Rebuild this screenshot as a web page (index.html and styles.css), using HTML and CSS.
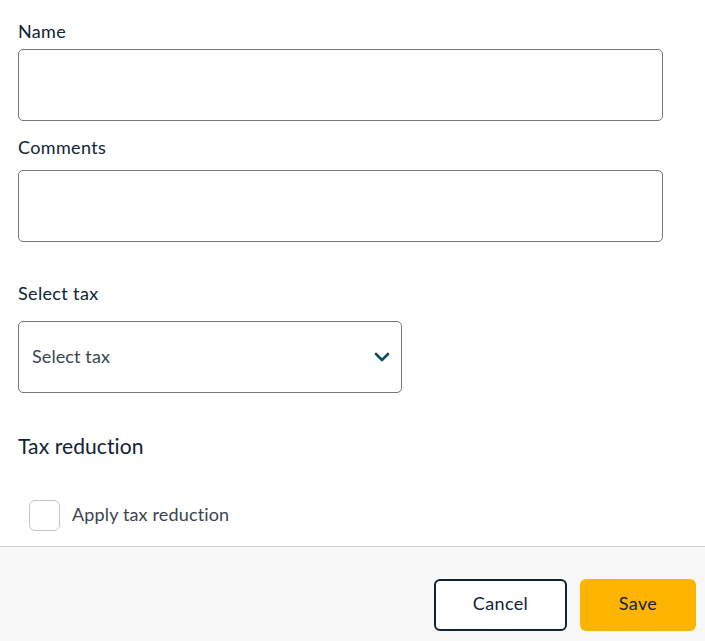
FILE: index.html
```html
<!DOCTYPE html>
<html>
<head>
<meta charset="utf-8">
<link rel="stylesheet" href="styles.css">
</head>
<body>
<div class="page">
  <div class="form">
    <label class="label label-name">Name</label>
    <div class="input"></div>
    <label class="label label-comments">Comments</label>
    <div class="input"></div>
    <label class="label label-select">Select tax</label>
    <div class="select">
      <span class="select-text">Select tax</span>
      <svg class="chevron" width="16" height="12" viewBox="0 0 16 12"><path d="M2 3 L8 9 L14 3" fill="none" stroke="#0e4d5f" stroke-width="2.6" stroke-linecap="round" stroke-linejoin="round"/></svg>
    </div>
    <h2 class="section-title">Tax reduction</h2>
    <div class="checkbox-row">
      <span class="checkbox"></span>
      <span class="checkbox-label">Apply tax reduction</span>
    </div>
  </div>
  <div class="footer">
    <button class="btn btn-cancel">Cancel</button>
    <button class="btn btn-save">Save</button>
  </div>
</div>
</body>
</html>
```
FILE: styles.css
```css
html, body { margin: 0; padding: 0; background: #ffffff; }
body { font-family: Lato, "Open Sans", sans-serif; color: #0f2236; }
.page { width: 705px; height: 641px; display: flex; flex-direction: column; }
.form { padding: 19px 42px 0 18px; display: flex; flex-direction: column; align-items: flex-start; height: 546px; flex-shrink: 0; box-sizing: border-box; }
.form > * { flex-shrink: 0; }
.label { display: block; font-size: 18px; font-weight: 400; line-height: 24px; color: #0f2236; letter-spacing: 0.35px; }
.label-name { margin-bottom: 6px; }
.label-comments { margin-top: 14px; margin-bottom: 11px; }
.label-select { margin-top: 39px; margin-bottom: 16px; }
.input { width: 645px; height: 72px; box-sizing: border-box; border: 1px solid #767676; border-radius: 5px; }
.select { width: 384px; height: 72px; box-sizing: border-box; border: 1px solid #767676; border-radius: 5px; display: flex; align-items: center; justify-content: space-between; padding: 0 11px 2px 13px; }
.select-text { font-size: 18px; color: #3a4450; letter-spacing: 0.1px; }
.chevron { display: block; margin-top: 2px; }
.section-title { font-size: 21px; font-weight: 400; line-height: 28px; margin: 39px 0 0 0; color: #0f2236; letter-spacing: 0.1px; }
.checkbox-row { display: flex; align-items: center; margin-top: 40px; padding-left: 11px; }
.checkbox { width: 31px; height: 31px; box-sizing: border-box; border: 1px solid #c4c4c4; border-radius: 6px; background: #fff; }
.checkbox-label { font-size: 18px; margin-left: 12px; color: #3a4450; letter-spacing: 0.15px; padding-bottom: 3px; }
.footer { flex: 1; background: #f8f8f8; border-top: 1px solid #cfcfcf; display: flex; justify-content: flex-end; align-items: flex-start; padding: 32px 9px 0 0; gap: 13px; }
.btn { font-family: Lato, "Open Sans", sans-serif; font-size: 18px; font-weight: 400; height: 52px; border-radius: 6px; color: #0f2236; cursor: pointer; letter-spacing: 0.35px; padding: 0 0 4px 0; }
.btn-cancel { width: 133px; background: #fff; border: 2px solid #0f2236; }
.btn-save { width: 116px; background: #ffb500; border: none; }
```
